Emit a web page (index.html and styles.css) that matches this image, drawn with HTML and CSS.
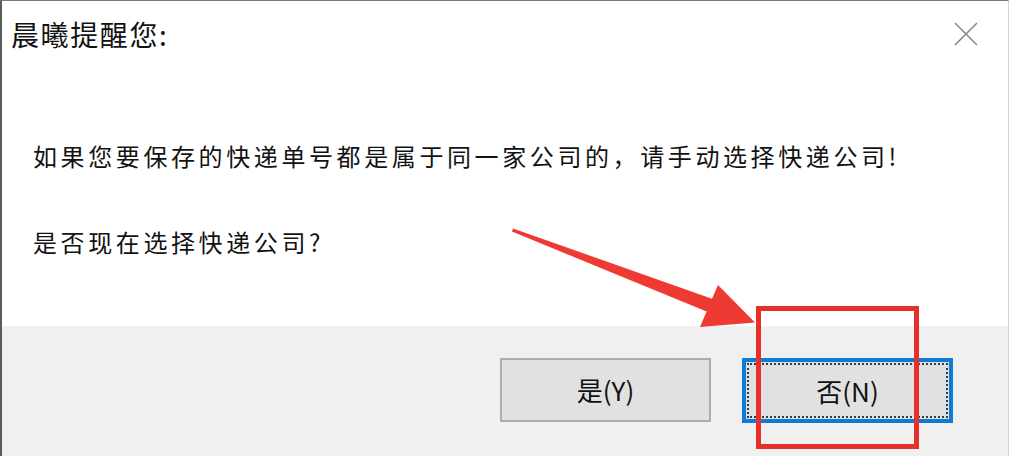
FILE: index.html
```html
<!DOCTYPE html>
<html lang="zh-CN">
<head>
<meta charset="utf-8">
<title>晨曦提醒您</title>
<link rel="stylesheet" href="styles.css">
</head>
<body>
<div class="window">
  <div class="titlebar">
    <div class="title">晨曦提醒您:</div>
    <svg class="close" width="24" height="24" viewBox="0 0 24 24">
      <path d="M1 1 L23 23 M23 1 L1 23" stroke="#8a8a8a" stroke-width="1.6" fill="none"/>
    </svg>
  </div>
  <div class="content">
    <p class="msg">如果您要保存的快递单号都是属于同一家公司的，请手动选择快递公司!</p>
    <p class="msg second">是否现在选择快递公司?</p>
  </div>
  <div class="footer">
    <div class="btn"><span class="label">是(Y)</span></div>
    <div class="btn btn-default"><div class="focus"><span class="label">否(N)</span></div></div>
  </div>
</div>
<svg class="annotation" width="1010" height="456" viewBox="0 0 1010 456">
  <polygon points="513,228.5 712,298.7 718,285 755,322.5 700,327 706.6,311.6 512,231.5" fill="#ee3a32"/>
  <rect x="758.5" y="308.5" width="158" height="138" fill="none" stroke="#e8302b" stroke-width="5"/>
</svg>
</body>
</html>
```

FILE: styles.css
```css
html, body {
  margin: 0;
  padding: 0;
  background: #ffffff;
}

body {
  width: 1010px;
  height: 456px;
  overflow: hidden;
  position: relative;
  font-family: "Noto Sans CJK SC", "Noto Sans", sans-serif;
  color: #121212;
}

.window {
  width: 1009px;
  height: 456px;
  box-sizing: border-box;
  border-left: 2px solid #5c5c5c;
  border-top: 1px solid #7d7d7d;
  border-right: 1px solid #d6d6d6;
  display: flex;
  flex-direction: column;
  background: #ffffff;
}

.titlebar {
  height: 65px;
  display: flex;
  align-items: center;
  justify-content: space-between;
  padding: 0 30px 0 9px;
}

.title {
  font-size: 28px;
  line-height: 36px;
  letter-spacing: 1.6px;
}

.close {
  display: block;
  margin-top: 1px;
}

.content {
  height: 260px;
  box-sizing: border-box;
  padding: 74px 0 0 31px;
}

.msg {
  margin: 0;
  font-size: 24px;
  line-height: 32px;
  letter-spacing: 3.6px;
  white-space: nowrap;
}

.msg.second {
  margin-top: 54px;
}

.footer {
  flex: 1;
  background: #f0f0f0;
  display: flex;
  justify-content: flex-end;
  align-items: flex-start;
  gap: 31px;
  padding: 32px 55px 0 0;
}

.btn {
  width: 211px;
  height: 64px;
  box-sizing: border-box;
  border: 2px solid #adadad;
  background: #e1e1e1;
  display: flex;
  align-items: center;
  justify-content: center;
}

.btn-default {
  height: 65px;
  border: 4px solid #0f7bd8;
  padding: 1px;
  align-items: stretch;
  justify-content: stretch;
}

.focus {
  flex: 1;
  border: 2px dotted #3a3a3a;
  display: flex;
  align-items: center;
  justify-content: center;
}

.label {
  font-size: 26px;
  line-height: 30px;
  color: #111;
}

.annotation {
  position: absolute;
  left: 0;
  top: 0;
  pointer-events: none;
}
```
